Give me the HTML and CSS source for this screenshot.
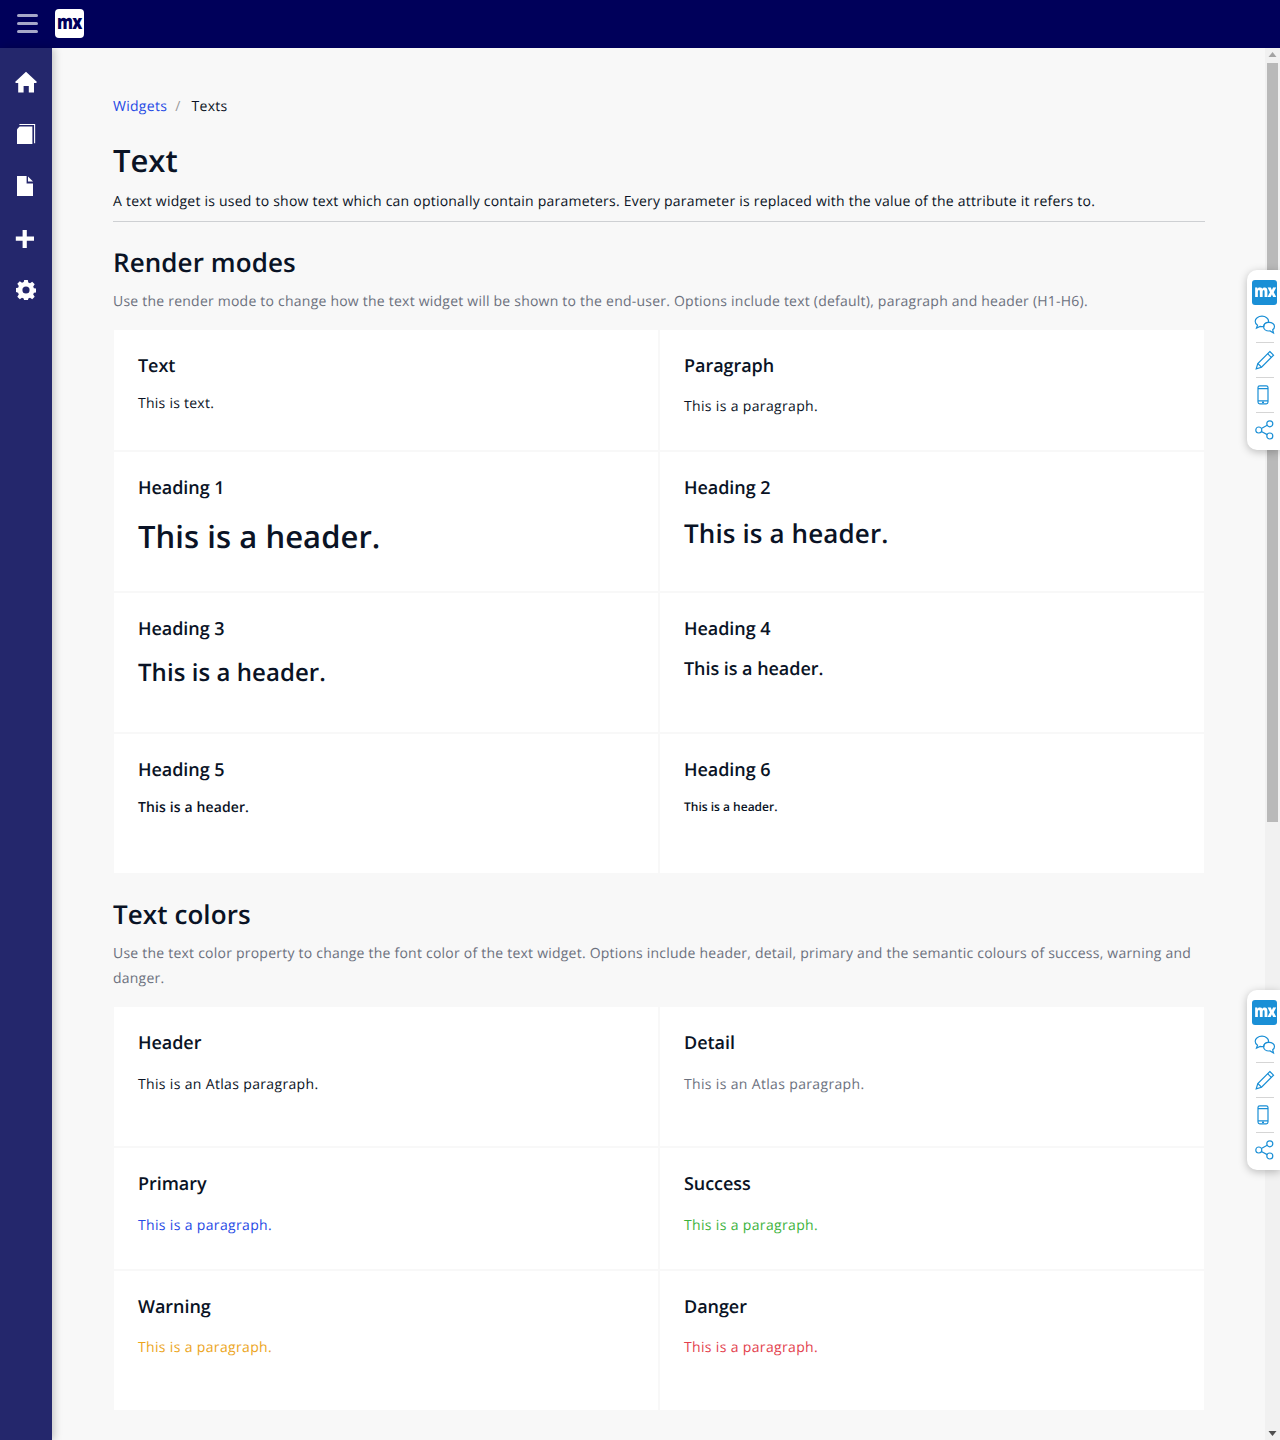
FILE: index.html
```html
<!DOCTYPE html>
<html lang="en">
<head>
<meta charset="utf-8">
<title>Text</title>
<link rel="stylesheet" href="styles.css">
</head>
<body>
<header class="topbar">
  <button class="burger" aria-label="Menu"><span></span><span></span><span></span></button>
  <div class="logo"><span>mx</span></div>
</header>
<div class="shell">
  <nav class="sidebar">
    <a class="nav-item"><svg width="22" height="22" viewBox="0 0 22 22"><path fill="#fff" d="M11 .8 22 11l-1 1.100h-2V21.500h-5.200v-6.400H8.600v6.400H3.200V12.100H1L0 11Z"/></svg></a>
    <a class="nav-item"><svg width="20" height="22" viewBox="0 0 20 22"><path fill="#fff" d="M1 6.200 3.600 3.600H16.400V21H1Z"/><path fill="none" stroke="#fff" stroke-width="1.100" d="M3.400 1.500H18.600V20.200"/></svg></a>
    <a class="nav-item doc"><svg width="18" height="22" viewBox="0 0 18 22"><path fill="#fff" d="M1 1H10.600V8.600H17V21H1Z"/><path fill="#fff" d="M12 1.400 17 6.600H12Z"/></svg></a>
    <a class="nav-item plus"><svg width="20" height="20" viewBox="0 0 20 20"><path fill="#fff" d="M7.600 1H11.800V7.600H19V11.800H11.800V19H7.600V11.800H.8V7.600H7.600Z"/></svg></a>
    <a class="nav-item"><svg width="20" height="20" viewBox="0 0 20 20"><path fill="#fff" fill-rule="evenodd" d="M8.200 0h3.600l.5 2.600 1.700.7 2.200-1.500 2.500 2.500-1.500 2.200.7 1.700 2.600.5v3.600l-2.600.5-.7 1.700 1.500 2.200-2.500 2.500-2.200-1.500-1.700.7-.5 2.600H8.200l-.5-2.600-1.700-.7-2.200 1.500-2.500-2.500 1.500-2.200-.7-1.700L-.5 11.800V8.200l2.600-.5.7-1.700L1.300 3.800l2.500-2.500L6 2.800l1.700-.7ZM10 6.400a3.600 3.600 0 1 0 0 7.200 3.600 3.600 0 0 0 0-7.200Z"/></svg></a>
  </nav>
  <main class="main">
    <div class="page">
      <ol class="crumbs">
        <li><a class="crumb-link">Widgets</a></li>
        <li class="crumb-sep">/</li>
        <li>Texts</li>
      </ol>
      <h1 class="title">Text</h1>
      <p class="lead">A text widget is used to show text which can optionally contain parameters. Every parameter is replaced with the value of the attribute it refers to.</p>
      <hr class="rule">
      <h2 class="section">Render modes</h2>
      <p class="detail intro">Use the render mode to change how the text widget will be shown to the end-user. Options include text (default), paragraph and header (H1-H6).</p>
      <div class="grid">
        <section class="card r-text"><h3>Text</h3><span class="sample">This is text.</span></section>
        <section class="card r-text"><h3>Paragraph</h3><p class="sample para">This is a paragraph.</p></section>
        <section class="card r-tall"><h3>Heading 1</h3><div class="h h1">This is a header.</div></section>
        <section class="card r-tall"><h3>Heading 2</h3><div class="h h2">This is a header.</div></section>
        <section class="card r-tall"><h3>Heading 3</h3><div class="h h3">This is a header.</div></section>
        <section class="card r-tall"><h3>Heading 4</h3><div class="h h4">This is a header.</div></section>
        <section class="card r-tall"><h3>Heading 5</h3><div class="h h5">This is a header.</div></section>
        <section class="card r-tall"><h3>Heading 6</h3><div class="h h6">This is a header.</div></section>
      </div>
      <h2 class="section colors">Text colors</h2>
      <p class="detail intro two">Use the text color property to change the font color of the text widget. Options include header, detail, primary and the semantic colours of success, warning and danger.</p>
      <div class="grid">
        <section class="card r-tall"><h3>Header</h3><p class="sample para drop">This is an Atlas paragraph.</p></section>
        <section class="card r-tall"><h3>Detail</h3><p class="sample para drop detail">This is an Atlas paragraph.</p></section>
        <section class="card r-mid"><h3>Primary</h3><p class="sample para drop c-primary">This is a paragraph.</p></section>
        <section class="card r-mid"><h3>Success</h3><p class="sample para drop c-success">This is a paragraph.</p></section>
        <section class="card r-tall"><h3>Warning</h3><p class="sample para c-warning">This is a paragraph.</p></section>
        <section class="card r-tall"><h3>Danger</h3><p class="sample para c-danger">This is a paragraph.</p></section>
      </div>
    </div>
  </main>
  <div class="scrollbar">
    <svg class="arrow" width="15" height="15" viewBox="0 0 15 15"><path fill="#a3a3a3" d="M7.500 4 11.500 9H3.500Z"/></svg>
    <div class="track"><div class="thumb"></div></div>
    <svg class="arrow" width="15" height="15" viewBox="0 0 15 15"><path fill="#505050" d="M3.500 6H11.500L7.500 11Z"/></svg>
  </div>
</div>
<aside class="dock dock-a">
  <span class="mxbadge"><b>mx</b></span>
  <svg class="t-ico" width="22" height="20" viewBox="0 0 22 20"><g fill="none" stroke="#1a8fd6" stroke-width="1.200"><path d="M8 1.200c3.600 0 6.600 2.200 6.600 5 0 .4 0 .6-.1.9-2.600.1-4.700 2-4.700 4.300-.6.100-1.200.200-1.800.200-.6 0-1.300-.100-1.900-.200L2.500 13l1-2.700C2 9.300 1.200 7.900 1.200 6.200c0-2.800 3-5 6.800-5Z"/><path d="M15 7.300c3 0 5.500 1.900 5.500 4.300 0 1.300-.7 2.400-1.800 3.200l.8 3.200-3.400-2.100c-.3.100-.7.100-1.100.100-3 0-5.400-1.900-5.400-4.300 0-2.500 2.400-4.400 5.400-4.400Z"/></g></svg>
  <i class="sep"></i>
  <svg class="t-ico" width="20" height="20" viewBox="0 0 20 20"><g fill="none" stroke="#1a8fd6" stroke-width="1.200"><path d="M14.800 1.500 18.500 5.200 6.500 17.200 1.200 18.800 2.800 13.500Z"/><path d="M12.600 3.700 16.300 7.400M2.800 13.500 6.500 17.200"/></g></svg>
  <i class="sep"></i>
  <svg class="t-ico phone" width="14" height="20" viewBox="0 0 14 20"><g fill="none" stroke="#1a8fd6" stroke-width="1.200"><rect x="2" y=".8" width="10" height="18" rx="1.800"/><path d="M2 3.600H12M2 15.800H12M6 17.300H8"/></g></svg>
  <i class="sep"></i>
  <svg class="t-ico" width="20" height="20" viewBox="0 0 20 20"><g fill="none" stroke="#1a8fd6" stroke-width="1.200"><circle cx="14.800" cy="3.800" r="3"/><circle cx="3.800" cy="10" r="3"/><circle cx="14.800" cy="16" r="3"/><path d="M6.400 8.500 12.200 5.300M6.400 11.500 12.200 14.600"/></g></svg>
</aside>
<aside class="dock dock-b">
  <span class="mxbadge"><b>mx</b></span>
  <svg class="t-ico" width="22" height="20" viewBox="0 0 22 20"><g fill="none" stroke="#1a8fd6" stroke-width="1.200"><path d="M8 1.200c3.600 0 6.600 2.200 6.600 5 0 .4 0 .6-.1.9-2.600.1-4.700 2-4.700 4.300-.6.100-1.200.200-1.800.200-.6 0-1.300-.100-1.900-.200L2.500 13l1-2.700C2 9.300 1.200 7.900 1.200 6.200c0-2.800 3-5 6.800-5Z"/><path d="M15 7.300c3 0 5.500 1.900 5.500 4.300 0 1.300-.7 2.400-1.800 3.200l.8 3.200-3.400-2.100c-.3.100-.7.100-1.100.100-3 0-5.400-1.900-5.400-4.300 0-2.500 2.400-4.400 5.400-4.400Z"/></g></svg>
  <i class="sep"></i>
  <svg class="t-ico" width="20" height="20" viewBox="0 0 20 20"><g fill="none" stroke="#1a8fd6" stroke-width="1.200"><path d="M14.800 1.500 18.500 5.200 6.500 17.200 1.200 18.800 2.800 13.500Z"/><path d="M12.600 3.700 16.300 7.400M2.800 13.500 6.500 17.200"/></g></svg>
  <i class="sep"></i>
  <svg class="t-ico phone" width="14" height="20" viewBox="0 0 14 20"><g fill="none" stroke="#1a8fd6" stroke-width="1.200"><rect x="2" y=".8" width="10" height="18" rx="1.800"/><path d="M2 3.600H12M2 15.800H12M6 17.300H8"/></g></svg>
  <i class="sep"></i>
  <svg class="t-ico" width="20" height="20" viewBox="0 0 20 20"><g fill="none" stroke="#1a8fd6" stroke-width="1.200"><circle cx="14.800" cy="3.800" r="3"/><circle cx="3.800" cy="10" r="3"/><circle cx="14.800" cy="16" r="3"/><path d="M6.400 8.500 12.200 5.300M6.400 11.500 12.200 14.600"/></g></svg>
</aside>
</body>
</html>
```
FILE: styles.css
```css
* { box-sizing: border-box; }
html, body { margin: 0; height: 100%; overflow: hidden; }
body {
  font-family: "Open Sans", sans-serif;
  font-size: 14px;
  line-height: 21px;
  color: #0a1325;
  background: #f8f8f8;
  display: flex;
  flex-direction: column;
  text-rendering: geometricPrecision;
}
.topbar {
  height: 48px;
  flex: none;
  background: #00005a;
  display: flex;
  align-items: center;
  padding-left: 17px;
  gap: 17px;
}
.burger {
  width: 21px;
  padding: 0;
  border: 0;
  background: none;
  display: flex;
  flex-direction: column;
  gap: 5px;
  margin-top: -2px;
}
.burger span { display: block; height: 3px; border-radius: 1.500px; background: #a6a8c8; }
.logo {
  width: 29px;
  height: 29px;
  margin-top: -1px;
  background: #fff;
  border-radius: 4px;
  display: flex;
  align-items: center;
  justify-content: center;
}
.logo span {
  font-weight: 800;
  font-size: 20px;
  letter-spacing: -1px;
  line-height: 20px;
  color: #00005a;
  margin-top: -3px;
  transform: scaleX(.8);
}
.shell { flex: 1; display: flex; min-height: 0; }
.sidebar {
  width: 52px;
  flex: none;
  background: #24276c;
  padding-top: 8px;
  display: flex;
  flex-direction: column;
  box-shadow: 2px 0 8px rgba(0,0,0,.22);
  position: relative;
  z-index: 1;
}
.nav-item { height: 52px; display: flex; align-items: center; justify-content: center; }
.doc { padding-right: 2px; }
.plus { padding-right: 2px; padding-top: 2px; }
.main { flex: 1; overflow: hidden; min-width: 0; }
.page { padding: 48px 60px 0 61px; }
.crumbs { list-style: none; margin: 0; padding: 0; display: flex; gap: 8px; height: 21px; letter-spacing: .28px; }
.crumb-link { color: #264ae5; }
.crumb-sep { color: #9a9a9a; margin-right: 3px; }
.title { margin: 23px 0 0; font-size: 31px; line-height: 42px; font-weight: 600; }
.lead { margin: 9px 0 0; letter-spacing: .225px; }
.rule { margin: 9px 0 0; border: 0; border-top: 1px solid #ced0d3; }
.section { margin: 20px 0 0; font-size: 26px; line-height: 40px; font-weight: 600; letter-spacing: .08px; }
.detail { color: #6c717e; }
.intro { margin: 7px 0 0; line-height: 25px; letter-spacing: .225px; }
.grid {
  display: grid;
  grid-template-columns: 1fr 1fr;
  margin: 15px 0 0;
}
.card { background: #fff; padding: 23px 24px 24px; border: 1px solid #f8f8f8; }
.r-text { height: 122px; }
.r-tall { height: 141px; }
.r-mid { height: 123px; }
.card h3 { margin: 0 0 15px; padding-top: 1px; font-size: 18px; line-height: 24px; font-weight: 600; letter-spacing: -.05px; }
.sample { display: block; margin: 0; letter-spacing: .25px; }
.para { margin-top: 18px; letter-spacing: .34px; }
.drop { margin-top: 19px; }
.h { font-weight: 600; color: #0a1325; }
.h1 { font-size: 31px; line-height: 42px; margin-top: 16px; letter-spacing: .06px; }
.h2 { font-size: 26px; line-height: 36px; margin-top: 12px; letter-spacing: .12px; }
.h3 { font-size: 24px; line-height: 32px; margin-top: 16px; letter-spacing: .06px; }
.h4 { font-size: 18px; line-height: 24px; margin-top: 16px; letter-spacing: -.05px; }
.h5 { font-size: 14px; line-height: 20px; margin-top: 16px; letter-spacing: .12px; }
.h6 { font-size: 12px; line-height: 20px; margin-top: 12px; }
.c-primary { color: #264ae5; }
.c-success { color: #3cb33d; }
.c-warning { color: #eca51c; }
.c-danger { color: #e33f4e; }
.scrollbar {
  width: 15px;
  flex: none;
  background: #f1f1f1;
  display: flex;
  flex-direction: column;
}
.arrow { flex: none; display: block; }
.track { flex: 1; padding: 0 2px; }
.thumb { height: 759px; background: #b9b9b9; }
.dock {
  position: fixed;
  right: 0;
  width: 33px;
  height: 180px;
  background: #fff;
  border-radius: 10px 0 0 10px;
  box-shadow: 0 2px 8px rgba(0,0,0,.25);
  display: flex;
  flex-direction: column;
  align-items: center;
  padding: 10px 0 0 2px;
  z-index: 5;
}
.dock-a { top: 270px; }
.dock-b { top: 990px; }
.mxbadge {
  width: 25px;
  height: 25px;
  flex: none;
  border-radius: 3px;
  background: #1a8fd6;
  color: #fff;
  font-size: 17px;
  line-height: 22px;
  letter-spacing: -1px;
  margin-bottom: 10px;
  display: flex;
  justify-content: center;
}
.mxbadge b { font-weight: 800; display: block; transform: scaleX(.82); }
.t-ico { flex: none; }
.phone { margin-left: -3px; }
.sep { display: block; width: 18px; height: 1px; background: #d5d5d5; margin: 7px 0; flex: none; }
```
